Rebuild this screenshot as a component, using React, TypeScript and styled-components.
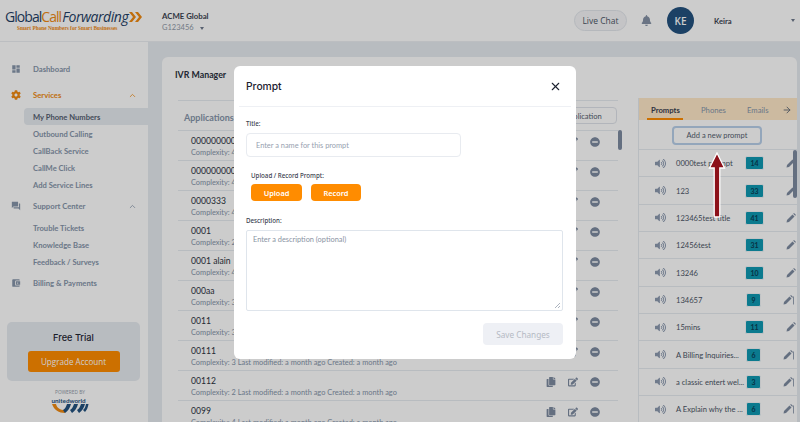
import React from 'react';
import styled, { createGlobalStyle } from 'styled-components';
import { FaBell, FaCog, FaCopy, FaEdit, FaMinusCircle, FaVolumeUp } from 'react-icons/fa';
import { MdDashboard, MdForum, MdAccountBalanceWallet } from 'react-icons/md';
import { FiArrowRight, FiChevronUp, FiX } from 'react-icons/fi';

const GlobalStyle = createGlobalStyle`
  html, body {
    margin: 0;
    padding: 0;
    overflow: hidden;
    background: #fff;
  }
  * {
    box-sizing: border-box;
  }
`;

const Page = styled.div`
  position: relative;
  width: 800px;
  height: 422px;
  overflow: hidden;
  display: flex;
  flex-direction: column;
  font-family: Lato, sans-serif;
  background: #fff;
`;

const Header = styled.header`
  height: 42px;
  flex: none;
  display: flex;
  align-items: center;
  padding: 0 5px;
  background: #fff;
  border-bottom: 1px solid #eceef2;
`;

const Logo = styled.div`
  width: 157px;
  flex: none;
  display: flex;
  flex-direction: column;
  margin-top: -2px;
`;

const LogoName = styled.div`
  display: flex;
  align-items: center;
  font-family: 'Open Sans', sans-serif;
  font-size: 14px;
  line-height: 16px;
  letter-spacing: -0.95px;
  color: #1f3f66;
`;

const LogoCall = styled.span`
  color: #f08a12;
`;

const LogoForward = styled.span`
  font-style: italic;
  letter-spacing: -0.45px;
  margin-left: 1px;
`;

const LogoTag = styled.div`
  margin-left: 12px;
  font-family: 'Liberation Serif', serif;
  font-size: 5.3px;
  line-height: 6px;
  font-weight: 700;
  color: #f08a12;
  white-space: nowrap;
`;

const Account = styled.div`
  flex: 1;
  display: flex;
  flex-direction: column;
  padding-top: 3px;
`;

const AccountName = styled.div`
  font-size: 7.8px;
  font-weight: 700;
  line-height: 11px;
  color: #3b4250;
`;

const AccountId = styled.div`
  font-size: 7.5px;
  line-height: 11px;
  color: #8f99a8;
`;

const Caret = styled.span`
  display: inline-block;
  margin-left: 6px;
  vertical-align: middle;
  border-left: 2.5px solid transparent;
  border-right: 2.5px solid transparent;
  border-top: 3px solid #6f7a8c;
`;

const ChatButton = styled.div`
  width: 53px;
  height: 21px;
  display: flex;
  align-items: center;
  justify-content: center;
  border: 1px solid #e3e6ec;
  border-radius: 11px;
  background: #f5f6f8;
  font-family: 'Open Sans', sans-serif;
  font-size: 8.5px;
  color: #4c5566;
`;

const Bell = styled.div`
  display: flex;
  margin: 0 15px 0 14px;
  color: #8592a6;
  font-size: 11px;
`;

const Avatar = styled.div`
  width: 27px;
  height: 27px;
  border-radius: 50%;
  display: flex;
  align-items: center;
  justify-content: center;
  background: #23527f;
  color: #fff;
  font-family: 'Open Sans', sans-serif;
  font-size: 10px;
  font-weight: 600;
`;

const UserName = styled.div`
  width: 77px;
  margin-left: 20px;
  font-size: 7.6px;
  font-weight: 700;
  color: #3b4250;
`;

const UserCaret = styled(Caret)`
  margin-left: 0;
`;

const Body = styled.div`
  flex: 1;
  min-height: 0;
  display: flex;
`;

const Sidebar = styled.aside`
  width: 148px;
  flex: none;
  display: flex;
  flex-direction: column;
  padding-top: 14px;
  background: #fff;
`;

const NavRow = styled.div<{ $active?: boolean }>`
  height: 26px;
  flex: none;
  display: flex;
  align-items: center;
  padding: 0 11px;
  font-size: 7.7px;
  font-weight: 700;
  color: ${(p) => (p.$active ? '#f08a12' : '#8695aa')};
`;

const NavIcon = styled.span`
  width: 22px;
  display: flex;
  font-size: 10px;
`;

const NavLabel = styled.span`
  flex: 1;
`;

const NavChevron = styled.span`
  display: flex;
  font-size: 9px;
`;

const SubItem = styled.div<{ $active?: boolean }>`
  height: 17px;
  flex: none;
  display: flex;
  align-items: center;
  margin-left: 24px;
  padding-left: 9px;
  border-radius: 4px 0 0 4px;
  font-size: 7.6px;
  font-weight: 700;
  background: ${(p) => (p.$active ? '#e7ebf1' : 'transparent')};
  color: ${(p) => (p.$active ? '#556070' : '#8695aa')};
`;

const TrialCard = styled.div`
  width: 133px;
  height: 59px;
  margin: auto 0 0 7px;
  display: flex;
  flex-direction: column;
  align-items: center;
  padding-top: 9px;
  border-radius: 5px;
  background: #e7ebf1;
`;

const TrialTitle = styled.div`
  font-family: Inter, sans-serif;
  font-size: 9.2px;
  line-height: 14px;
  font-weight: 500;
  color: #1f2633;
`;

const UpgradeButton = styled.div`
  width: 92px;
  height: 21px;
  margin-top: 6px;
  display: flex;
  align-items: center;
  justify-content: center;
  border-radius: 3px;
  background: #ff8c00;
  color: #fff;
  font-family: 'Open Sans', sans-serif;
  font-size: 8.1px;
`;

const Powered = styled.div`
  height: 41px;
  flex: none;
  display: flex;
  flex-direction: column;
  align-items: center;
  padding: 8px 8px 0 0;
`;

const PoweredText = styled.div`
  font-family: 'Open Sans', sans-serif;
  font-size: 4.8px;
  line-height: 6px;
  color: #8f99a8;
`;

const Main = styled.main`
  flex: 1;
  min-width: 0;
  padding: 15px 3px 0 14px;
  background: #e7ebf1;
`;

const Card = styled.section`
  height: 100%;
  display: flex;
  flex-direction: column;
  border-radius: 6px 6px 0 0;
  background: #fff;
  overflow: hidden;
`;

const CardTitle = styled.h1`
  height: 43px;
  flex: none;
  margin: 0;
  padding: 12px 13px 0;
  font-size: 8.8px;
  line-height: 12px;
  font-weight: 700;
  color: #2b3240;
`;

const CardBody = styled.div`
  flex: 1;
  min-height: 0;
  display: flex;
  gap: 16px;
  padding-left: 16px;
`;

const Apps = styled.div`
  position: relative;
  width: 444px;
  flex: none;
`;

const AppsHead = styled.div`
  height: 31px;
  display: flex;
  align-items: center;
  justify-content: space-between;
  margin-right: 4px;
  padding: 0 1px 0 6px;
  border-top: 1px solid #e7ebf1;
  border-bottom: 1px solid #e7ebf1;
`;

const AppsTitle = styled.div`
  margin-top: 3px;
  font-size: 9px;
  font-weight: 700;
  color: #8695aa;
`;

const NewAppButton = styled.div`
  width: 104px;
  height: 17px;
  display: flex;
  align-items: center;
  justify-content: center;
  border: 1px solid #dfe3ea;
  border-radius: 4px;
  font-size: 7.6px;
  color: #556070;
`;

const AppRow = styled.div`
  height: 30px;
  display: flex;
  align-items: center;
  margin-right: 4px;
  padding: 0 18px 0 13px;
  border-bottom: 1px solid #e7ebf1;
`;

const AppText = styled.div`
  flex: 1;
  min-width: 0;
  padding-top: 1px;
`;

const AppName = styled.div`
  font-size: 8.6px;
  line-height: 12px;
  color: #2b3240;
`;

const AppMeta = styled.div`
  font-size: 7.4px;
  line-height: 11px;
  color: #8695aa;
`;

const AppActions = styled.div`
  display: flex;
  align-items: center;
  gap: 12px;
  margin-top: -8px;
  color: #7d8ba1;
  font-size: 10px;
  & > svg {
    display: block;
  }
`;

const AppsScroll = styled.div`
  position: absolute;
  top: 30px;
  right: 0;
  width: 4px;
  height: 20px;
  border-radius: 2px;
  background: #7d8ba1;
`;

const PromptPanel = styled.div`
  position: relative;
  flex: 1;
  min-width: 0;
  margin-top: -2px;
  display: flex;
  flex-direction: column;
  border-left: 1px solid #e7ebf1;
  overflow: hidden;
`;

const Tabs = styled.div`
  height: 22px;
  flex: none;
  display: flex;
  align-items: center;
  padding: 1px 5px 0 12px;
  background: #ffe9c9;
  font-size: 7.7px;
`;

const Tab = styled.div<{ $active?: boolean; $width: number }>`
  width: ${(p) => p.$width}px;
  flex: none;
  font-weight: ${(p) => (p.$active ? 700 : 400)};
  color: ${(p) => (p.$active ? '#3b4250' : '#8695aa')};
`;

const ActiveTab = styled(Tab)`
  position: relative;
  &::after {
    content: '';
    position: absolute;
    left: -4px;
    bottom: -5px;
    width: 36px;
    height: 2px;
    background: #ff8c00;
  }
`;

const TabArrow = styled.div`
  display: flex;
  margin-left: auto;
  color: #556070;
  font-size: 10px;
`;

const AddRow = styled.div`
  height: 30px;
  flex: none;
  display: flex;
  justify-content: center;
  align-items: center;
  padding: 2px 2px 0 0;
  border-bottom: 1px solid #e7ebf1;
`;

const AddButton = styled.div`
  width: 90px;
  height: 19px;
  display: flex;
  align-items: center;
  justify-content: center;
  border: 2px solid #b8d0ea;
  border-radius: 4px;
  font-size: 7.5px;
  color: #556070;
`;

const PromptRow = styled.div`
  height: 27.35px;
  flex: none;
  display: flex;
  align-items: center;
  padding-left: 16px;
  border-bottom: 1px solid #e7ebf1;
  font-size: 7.6px;
  color: #4c5566;
`;

const Speaker = styled.span`
  width: 21px;
  flex: none;
  display: flex;
  color: #8c9ab0;
  font-size: 11px;
`;

const PromptTitle = styled.span`
  width: 69px;
  flex: none;
  white-space: nowrap;
`;

const Badge = styled.span<{ $wide: boolean }>`
  width: ${(p) => (p.$wide ? 19 : 15)}px;
  height: 14px;
  flex: none;
  margin-left: ${(p) => (p.$wide ? 0 : 1)}px;
  display: flex;
  align-items: center;
  justify-content: center;
  border: 1px solid #f3f5f8;
  border-radius: 2px;
  background: #0e99b2;
  font-size: 7px;
  font-weight: 700;
  color: #0a3f56;
`;

const PencilSlot = styled.span`
  display: flex;
  margin-left: 22px;
  color: #7d8ba1;
`;

const PromptScroll = styled.div`
  position: absolute;
  top: 52px;
  right: 0;
  width: 4px;
  height: 48px;
  border-radius: 2px;
  background: #7d8ba1;
`;

const Overlay = styled.div`
  position: absolute;
  inset: 0;
  background: rgba(0, 0, 0, 0.2);
`;

const Modal = styled.div`
  position: absolute;
  left: 234px;
  top: 66px;
  width: 342px;
  height: 293px;
  display: flex;
  flex-direction: column;
  padding: 0 5px;
  border-radius: 6px;
  background: #fff;
  font-family: Lato, sans-serif;
`;

const ModalHead = styled.div`
  height: 41px;
  flex: none;
  display: flex;
  align-items: center;
  justify-content: space-between;
  padding: 0 9px 0 7px;
  border-bottom: 1px solid #eef0f4;
`;

const ModalTitle = styled.h2`
  margin: 0;
  font-family: Inter, sans-serif;
  font-size: 10.3px;
  font-weight: 500;
  color: #1c2230;
`;

const CloseIcon = styled.span`
  display: flex;
  color: #1c2230;
  font-size: 13px;
`;

const ModalForm = styled.div`
  flex: 1;
  display: flex;
  flex-direction: column;
  padding: 12px 8px 0 7px;
`;

const FieldLabel = styled.div<{ $indent?: number }>`
  margin-left: ${(p) => p.$indent ?? 0}px;
  font-family: 'Noto Sans', sans-serif;
  font-size: 6.2px;
  line-height: 10px;
  font-weight: 500;
  color: #3b4250;
`;

const TitleInput = styled.div`
  width: 215px;
  height: 24px;
  margin: 4px 0 14px;
  display: flex;
  align-items: center;
  padding-left: 9px;
  border: 1px solid #e8ebf0;
  border-radius: 4px;
  font-size: 7.4px;
  color: #97a1b0;
`;

const ButtonRow = styled.div`
  display: flex;
  gap: 9px;
  margin: 3px 0 15px 5px;
`;

const OrangeButton = styled.div<{ $width: number }>`
  width: ${(p) => p.$width}px;
  height: 17px;
  display: flex;
  align-items: center;
  justify-content: center;
  border-radius: 4px;
  background: #ff8c00;
  color: #fff;
  font-family: 'Noto Sans', sans-serif;
  font-size: 7.4px;
  font-weight: 600;
`;

const DescriptionBox = styled.div`
  position: relative;
  width: 317px;
  height: 81px;
  margin-top: 4px;
  padding: 2px 6px;
  border: 1px solid #dfe5ec;
  border-radius: 2px;
  font-size: 7.4px;
  line-height: 14px;
  color: #8a94a3;
`;

const ResizeGrip = styled.svg`
  position: absolute;
  right: 1px;
  bottom: 1px;
`;

const SaveButton = styled.div`
  width: 80px;
  height: 22px;
  margin: 12px 0 0 237px;
  display: flex;
  align-items: center;
  justify-content: center;
  border-radius: 4px;
  background: #eef0f5;
  color: #b5bac4;
  font-family: 'Noto Sans', sans-serif;
  font-size: 8.2px;
`;

const ArrowMark = styled.svg`
  position: absolute;
  left: 706px;
  top: 152px;
`;

const subServices = ['My Phone Numbers', 'Outbound Calling', 'CallBack Service', 'CallMe Click', 'Add Service Lines'];
const subSupport = ['Trouble Tickets', 'Knowledge Base', 'Feedback / Surveys'];

const apps = [
  { name: '00000000000', meta: 'Complexity: 4 Last modified: a month ago Created: a month ago' },
  { name: '00000000000', meta: 'Complexity: 4 Last modified: a month ago Created: a month ago' },
  { name: '0000333', meta: 'Complexity: 4 Last modified: a month ago Created: a month ago' },
  { name: '0001', meta: 'Complexity: 2 Last modified: a month ago Created: a month ago' },
  { name: '0001 alain', meta: 'Complexity: 4 Last modified: a month ago Created: a month ago' },
  { name: '000aa', meta: 'Complexity: 3 Last modified: a month ago Created: a month ago' },
  { name: '0011', meta: 'Complexity: 3 Last modified: a month ago Created: a month ago' },
  { name: '00111', meta: 'Complexity: 3 Last modified: a month ago Created: a month ago' },
  { name: '00112', meta: 'Complexity: 2 Last modified: a month ago Created: a month ago' },
  { name: '0099', meta: 'Complexity: 4 Last modified: a month ago Created: a month ago' },
];

const prompts = [
  { title: '0000test prompt', count: '14' },
  { title: '123', count: '33' },
  { title: '123465test title', count: '41' },
  { title: '12456test', count: '31' },
  { title: '13246', count: '10' },
  { title: '134657', count: '9' },
  { title: '15mins', count: '11' },
  { title: 'A Billing Inquiries...', count: '6' },
  { title: 'a classic entert wel...', count: '3' },
  { title: 'A Explain why the ...', count: '6' },
];

const Pencil: React.FC<{ edge: boolean }> = ({ edge }) => (
  <svg width="11" height="10" viewBox="0 0 11 10">
    <path d="M0.5 9.5 L1 7 L6.5 1.5 L8.5 3.5 L3 9 Z" fill="currentColor" />
    <path d="M7.2 0.8 L8 0 L10 2 L9.2 2.8 Z" fill="currentColor" />
    {edge && <path d="M10.5 1.5 V9.5" stroke="currentColor" strokeWidth="0.8" />}
  </svg>
);

const App: React.FC = () => {
  return (
    <Page>
      <GlobalStyle />
      <Header>
        <Logo>
          <LogoName>
            Global<LogoCall>Call</LogoCall>
            <LogoForward>Forwarding</LogoForward>
            <svg width="13" height="12" viewBox="0 0 13 12" style={{ marginLeft: 1 }}>
              <path d="M0 1 L3 1 L7 6 L3 11 L0 11 L4 6 Z" fill="#f08a12" />
              <path d="M6 1 L9 1 L13 6 L9 11 L6 11 L10 6 Z" fill="#f08a12" />
            </svg>
          </LogoName>
          <LogoTag>Smart Phone Numbers for Smart Businesses</LogoTag>
        </Logo>
        <Account>
          <AccountName>ACME Global</AccountName>
          <AccountId>
            G123456
            <Caret />
          </AccountId>
        </Account>
        <ChatButton>Live Chat</ChatButton>
        <Bell>
          <FaBell />
        </Bell>
        <Avatar>KE</Avatar>
        <UserName>Keira</UserName>
        <UserCaret />
      </Header>

      <Body>
        <Sidebar>
          <NavRow>
            <NavIcon>
              <MdDashboard />
            </NavIcon>
            <NavLabel>Dashboard</NavLabel>
          </NavRow>
          <NavRow $active>
            <NavIcon>
              <FaCog />
            </NavIcon>
            <NavLabel>Services</NavLabel>
            <NavChevron>
              <FiChevronUp />
            </NavChevron>
          </NavRow>
          {subServices.map((item, i) => (
            <SubItem key={item} $active={i === 0}>
              {item}
            </SubItem>
          ))}
          <NavRow>
            <NavIcon>
              <MdForum />
            </NavIcon>
            <NavLabel>Support Center</NavLabel>
            <NavChevron>
              <FiChevronUp />
            </NavChevron>
          </NavRow>
          {subSupport.map((item) => (
            <SubItem key={item}>{item}</SubItem>
          ))}
          <NavRow>
            <NavIcon>
              <MdAccountBalanceWallet />
            </NavIcon>
            <NavLabel>Billing &amp; Payments</NavLabel>
          </NavRow>
          <TrialCard>
            <TrialTitle>Free Trial</TrialTitle>
            <UpgradeButton>Upgrade Account</UpgradeButton>
          </TrialCard>
          <Powered>
            <PoweredText>POWERED BY</PoweredText>
            <svg width="38" height="20" viewBox="0 0 38 20">
              <path d="M1 9 C3 15 8 18 14 18 L14 15 C9 15 6 13 5 9 Z" fill="#f08a12" />
              <path d="M14 18 C17 16 19 13 20 9 L16 9 C15 12 14 14 12 15 Z" fill="#23527f" />
              <path d="M21 18 C24 16 26 13 27 9 L23 9 C22 12 21 14 19 15 Z" fill="#23527f" />
              <path d="M28 18 C31 16 33 13 34 9 L30 9 C29 12 28 14 26 15 Z" fill="#23527f" />
              <path d="M34 17 C36 15 37 12 37.5 9 L35 9 C34.5 12 33.5 14 32 15 Z" fill="#23527f" />
              <text x="0.5" y="8" fontFamily="Lato, sans-serif" fontSize="6.3" fontWeight="700" fill="#23527f">
                unitedworld
              </text>
            </svg>
          </Powered>
        </Sidebar>

        <Main>
          <Card>
            <CardTitle>IVR Manager</CardTitle>
            <CardBody>
              <Apps>
                <AppsHead>
                  <AppsTitle>Applications</AppsTitle>
                  <NewAppButton>Add a new application</NewAppButton>
                </AppsHead>
                {apps.map((app, i) => (
                  <AppRow key={`${app.name}-${i}`}>
                    <AppText>
                      <AppName>{app.name}</AppName>
                      <AppMeta>{app.meta}</AppMeta>
                    </AppText>
                    <AppActions>
                      <FaCopy />
                      <FaEdit />
                      <FaMinusCircle />
                    </AppActions>
                  </AppRow>
                ))}
                <AppsScroll />
              </Apps>
              <PromptPanel>
                <Tabs>
                  <ActiveTab $active $width={50}>
                    Prompts
                  </ActiveTab>
                  <Tab $width={46}>Phones</Tab>
                  <Tab $width={30}>Emails</Tab>
                  <TabArrow>
                    <FiArrowRight />
                  </TabArrow>
                </Tabs>
                <AddRow>
                  <AddButton>Add a new prompt</AddButton>
                </AddRow>
                {prompts.map((prompt) => {
                  const wide = prompt.count.length > 1;
                  return (
                    <PromptRow key={prompt.title}>
                      <Speaker>
                        <FaVolumeUp />
                      </Speaker>
                      <PromptTitle>{prompt.title}</PromptTitle>
                      <Badge $wide={wide}>{prompt.count}</Badge>
                      <PencilSlot>
                        <Pencil edge={!wide} />
                      </PencilSlot>
                    </PromptRow>
                  );
                })}
                <PromptScroll />
              </PromptPanel>
            </CardBody>
          </Card>
        </Main>
      </Body>

      <Overlay />

      <Modal>
        <ModalHead>
          <ModalTitle>Prompt</ModalTitle>
          <CloseIcon>
            <FiX />
          </CloseIcon>
        </ModalHead>
        <ModalForm>
          <FieldLabel>Title:</FieldLabel>
          <TitleInput>Enter a name for this prompt</TitleInput>
          <FieldLabel $indent={5}>Upload / Record Prompt:</FieldLabel>
          <ButtonRow>
            <OrangeButton $width={51}>Upload</OrangeButton>
            <OrangeButton $width={50}>Record</OrangeButton>
          </ButtonRow>
          <FieldLabel>Description:</FieldLabel>
          <DescriptionBox>
            Enter a description (optional)
            <ResizeGrip width="7" height="7" viewBox="0 0 7 7">
              <path d="M1 6 L6 1 M4 6 L6 4" stroke="#8a94a3" strokeWidth="0.7" />
            </ResizeGrip>
          </DescriptionBox>
          <SaveButton>Save Changes</SaveButton>
        </ModalForm>
      </Modal>

      <ArrowMark width="22" height="68" viewBox="0 0 22 68">
        <path
          d="M11 1 L18.5 16 L13.8 16 L13.8 65 L8.2 65 L8.2 16 L3.5 16 Z"
          fill="#8c1019"
          stroke="#fff"
          strokeWidth="1.3"
        />
      </ArrowMark>
    </Page>
  );
};

export default App;
